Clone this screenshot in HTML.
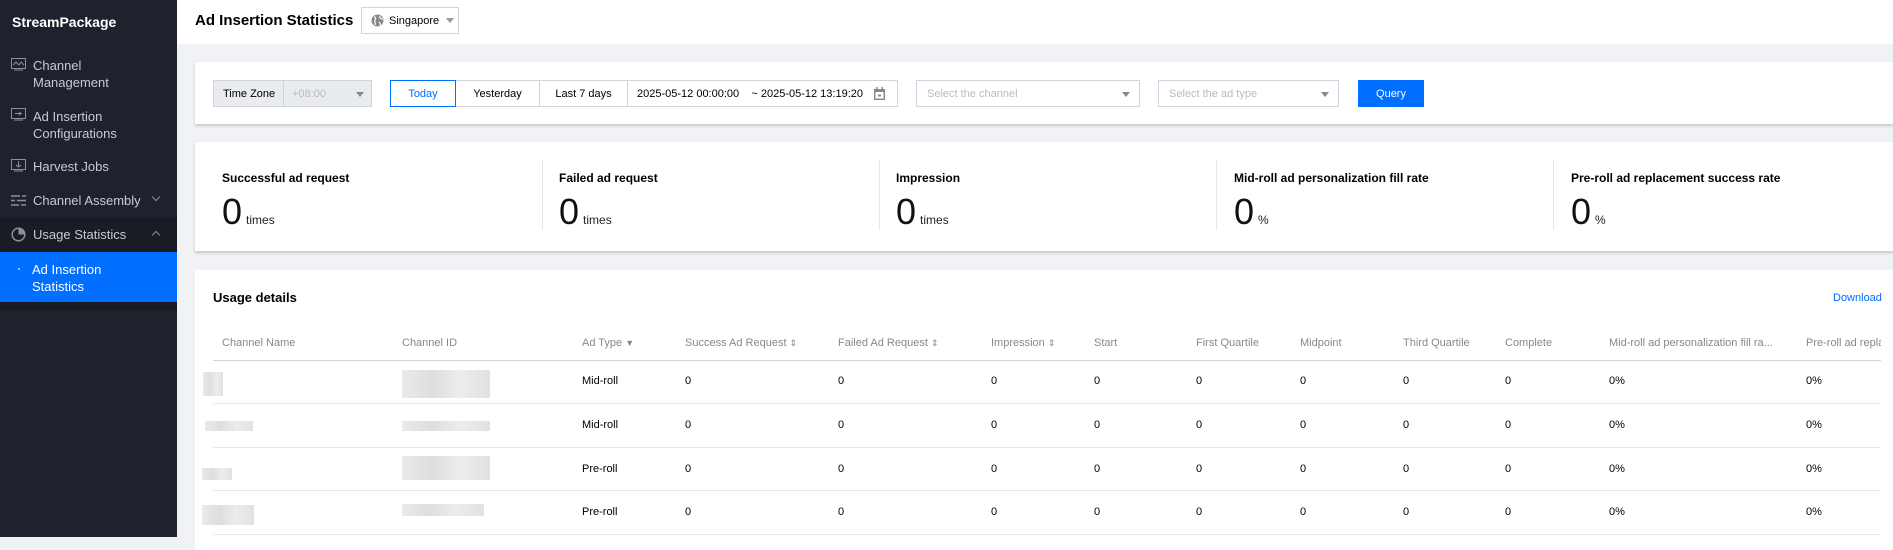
<!DOCTYPE html>
<html><head><meta charset="utf-8"><style>
*{box-sizing:border-box;margin:0;padding:0}
body{width:1893px;height:537px;overflow:hidden;background:#f1f2f5;font-family:"Liberation Sans",Arial,sans-serif;position:relative;color:#000}
.sb{position:absolute;left:0;top:0;width:177px;height:537px;background:#1f222c}
.abs{position:absolute}
.sb .t{color:#c6cad3;font-size:13px;line-height:17px;left:33px}
.ic{position:absolute;left:11px;width:15px;height:13px}
.hdr{position:absolute;left:177px;top:0;width:1716px;height:44px;background:#fff}
.card{position:absolute;left:195px;width:1698px;background:#fff;box-shadow:0 2px 3px rgba(0,0,0,.18)}
.box{position:absolute;border:1px solid #cfd5de;font-size:12px;display:flex;align-items:center}
.ph{color:#bbb}
.tri{position:absolute;width:0;height:0;border-left:4px solid transparent;border-right:4px solid transparent;border-top:5px solid #888}
.lab{position:absolute;top:29px;font-size:12px;font-weight:bold}
.num{position:absolute;top:50px;font-size:36px;font-weight:300;line-height:40px;color:#111}
.unit{font-size:12px;margin-left:4px;color:#222}
.div{position:absolute;top:18px;height:70px;width:1px;background:#e5e5e5}
.th{position:absolute;top:337px;font-size:11px;color:#888;white-space:nowrap}
.td{position:absolute;font-size:11px;color:#000}
.hl{position:absolute;left:213px;width:1668px;height:1px;background:#e5e8ec}
.blur{position:absolute;background:linear-gradient(90deg,#e6e6e6,#d8d8d8,#e9e9e9,#dcdcdc);opacity:.85}
</style></head><body>
<div class="sb">
 <div class="abs" style="left:12px;top:14px;color:#fff;font-weight:bold;font-size:14px">StreamPackage</div>
 <svg class="ic" style="top:58px" viewBox="0 0 15 13"><rect x="0.5" y="0.5" width="14" height="10" fill="none" stroke="#8a909c"/><path d="M2 7l3-3 3 3 2-3 3 3" fill="none" stroke="#8a909c"/><rect x="3" y="11.5" width="9" height="1" fill="#8a909c"/></svg>
 <div class="abs t" style="top:57px">Channel<br>Management</div>
 <svg class="ic" style="top:108px" viewBox="0 0 15 13"><rect x="0.5" y="0.5" width="14" height="10" fill="none" stroke="#8a909c"/><path d="M4 5.5h7M8 4l2 1.5-2 1.5" fill="none" stroke="#8a909c"/><rect x="3" y="11.5" width="9" height="1" fill="#8a909c"/></svg>
 <div class="abs t" style="top:108px">Ad Insertion<br>Configurations</div>
 <svg class="ic" style="top:159px" viewBox="0 0 15 13"><rect x="0.5" y="0.5" width="14" height="10" fill="none" stroke="#8a909c"/><path d="M7.5 2v6M5 6l2.5 2 2.5-2" fill="none" stroke="#8a909c"/><rect x="3" y="11.5" width="9" height="1" fill="#8a909c"/></svg>
 <div class="abs t" style="top:158px">Harvest Jobs</div>
 <svg class="ic" style="top:194px" viewBox="0 0 15 13"><path d="M0 2h15M0 6.5h15M0 11h15" stroke="#8a909c" stroke-width="1.5"/><path d="M10 0v4M5 4.5v4M9 9v4" stroke="#1f222c" stroke-width="2"/></svg>
 <div class="abs t" style="top:192px">Channel Assembly</div>
 <div class="abs" style="left:153px;top:194px;width:6px;height:6px;border-right:1px solid #8a909c;border-bottom:1px solid #8a909c;transform:rotate(45deg)"></div>
 <div class="abs" style="left:0;top:217px;width:177px;height:35px;background:#191c24"></div>
 <svg class="ic" style="top:227px;height:15px" viewBox="0 0 15 15"><circle cx="7.5" cy="7.5" r="6.3" fill="none" stroke="#8a909c" stroke-width="1.5"/><path d="M7.5 7.5V1.2A6.3 6.3 0 0 1 13.8 7.5z" fill="#8a909c"/></svg>
 <div class="abs t" style="top:226px">Usage Statistics</div>
 <div class="abs" style="left:153px;top:232px;width:6px;height:6px;border-left:1px solid #8a909c;border-top:1px solid #8a909c;transform:rotate(45deg)"></div>
 <div class="abs" style="left:0;top:252px;width:177px;height:50px;background:#006eff"></div>
 <div class="abs" style="left:18px;top:268px;width:2px;height:2px;background:#9cc3ff"></div>
 <div class="abs t" style="top:261px;left:32px;color:#fff">Ad Insertion<br>Statistics</div>
 <div class="abs" style="left:0;top:302px;width:177px;height:9px;background:#191c24"></div>
</div>
<div class="hdr">
 <div class="abs" style="left:18px;top:12px;font-size:15px;font-weight:bold">Ad Insertion Statistics</div>
 <div class="box" style="left:184px;top:7px;width:98px;height:27px;padding-left:9px">
  <svg width="13" height="13" viewBox="0 0 13 13"><circle cx="6.5" cy="6.5" r="6" fill="#888"/><path d="M3 3c2 0 2 2 1 3s1 3 0 5M9 2c-1 2 1 3 3 3M8 8c1 1 2 2 1 4" stroke="#fff" stroke-width="1.2" fill="none"/></svg>
  <span style="margin-left:5px;font-size:11px">Singapore</span>
  <div class="tri" style="left:84px;top:10px;border-top-color:#999"></div>
 </div>
</div>
<div class="card" style="top:62px;height:62px">
 <div class="box" style="left:18px;top:18px;width:71px;height:27px;background:#e9ebef;padding-left:9px;font-size:11px">Time Zone</div>
 <div class="box" style="left:88px;top:18px;width:89px;height:27px;background:#e9ebef;padding-left:8px;color:#bbb;font-size:11px">+08:00<div class="tri" style="left:72px;top:11px"></div></div>
 <div class="box" style="left:195px;top:18px;width:66px;height:27px;border-color:#006eff;color:#006eff;justify-content:center;z-index:2;font-size:11px">Today</div>
 <div class="box" style="left:260px;top:18px;width:85px;height:27px;justify-content:center;font-size:11px">Yesterday</div>
 <div class="box" style="left:344px;top:18px;width:89px;height:27px;justify-content:center;font-size:11px">Last 7 days</div>
 <div class="box" style="left:432px;top:18px;width:271px;height:27px;padding-left:9px;font-size:11px">2025-05-12 00:00:00 &nbsp;&nbsp; ~ 2025-05-12 13:19:20
  <svg class="abs" style="left:246px;top:6px" width="11" height="13" viewBox="0 0 11 13"><rect x="0" y="2" width="11" height="11" fill="#888"/><rect x="1.5" y="5" width="8" height="6.5" fill="#fff"/><rect x="4" y="7.5" width="3" height="2" fill="#888"/><rect x="2" y="0" width="1.5" height="3" fill="#888"/><rect x="7.5" y="0" width="1.5" height="3" fill="#888"/></svg></div>
 <div class="box ph" style="left:721px;top:18px;width:224px;height:27px;padding-left:10px;font-size:11px">Select the channel<div class="tri" style="left:205px;top:11px"></div></div>
 <div class="box ph" style="left:963px;top:18px;width:181px;height:27px;padding-left:10px;font-size:11px">Select the ad type<div class="tri" style="left:162px;top:11px"></div></div>
 <div class="abs" style="left:1163px;top:18px;width:66px;height:27px;background:#006eff;color:#fff;font-size:11px;display:flex;align-items:center;justify-content:center">Query</div>
</div>
<div class="card" style="top:142px;height:109px">
 <div class="lab" style="left:27px">Successful ad request</div><div class="num" style="left:27px">0<span class="unit">times</span></div>
 <div class="div" style="left:347px"></div>
 <div class="lab" style="left:364px">Failed ad request</div><div class="num" style="left:364px">0<span class="unit">times</span></div>
 <div class="div" style="left:684px"></div>
 <div class="lab" style="left:701px">Impression</div><div class="num" style="left:701px">0<span class="unit">times</span></div>
 <div class="div" style="left:1021px"></div>
 <div class="lab" style="left:1039px">Mid-roll ad personalization fill rate</div><div class="num" style="left:1039px">0<span class="unit">%</span></div>
 <div class="div" style="left:1358px"></div>
 <div class="lab" style="left:1376px">Pre-roll ad replacement success rate</div><div class="num" style="left:1376px">0<span class="unit">%</span></div>
</div>
<div class="card" style="top:270px;height:280px;box-shadow:none"></div>
<div class="abs" style="left:213px;top:290px;font-size:13px;font-weight:bold">Usage details</div>
<div class="abs" style="left:1833px;top:292px;font-size:11px;color:#006eff">Download</div>
<div class="th" style="left:222px">Channel Name</div>
<div class="th" style="left:402px">Channel ID</div>
<div class="th" style="left:582px">Ad Type <span style="font-size:9px">&#9660;</span></div>
<div class="th" style="left:685px">Success Ad Request <span style="font-size:9px">&#8661;</span></div>
<div class="th" style="left:838px">Failed Ad Request <span style="font-size:9px">&#8661;</span></div>
<div class="th" style="left:991px">Impression <span style="font-size:9px">&#8661;</span></div>
<div class="th" style="left:1094px">Start</div>
<div class="th" style="left:1196px">First Quartile</div>
<div class="th" style="left:1300px">Midpoint</div>
<div class="th" style="left:1403px">Third Quartile</div>
<div class="th" style="left:1505px">Complete</div>
<div class="th" style="left:1609px">Mid-roll ad personalization fill ra...</div>
<div class="th" style="left:1806px;width:75px;overflow:hidden">Pre-roll ad replacement</div>
<div class="hl" style="top:360px;background:#cfd5de"></div>
<div class="hl" style="top:403px"></div><div class="hl" style="top:447px"></div><div class="hl" style="top:490px"></div><div class="hl" style="top:534px"></div>
<div class="blur" style="left:203px;top:372px;width:20px;height:24px"></div>
<div class="blur" style="left:402px;top:370px;width:88px;height:28px"></div>
<div class="blur" style="left:205px;top:421px;width:48px;height:10px"></div>
<div class="blur" style="left:402px;top:421px;width:88px;height:10px"></div>
<div class="blur" style="left:202px;top:468px;width:30px;height:12px"></div>
<div class="blur" style="left:402px;top:456px;width:88px;height:24px"></div>
<div class="blur" style="left:202px;top:505px;width:52px;height:20px"></div>
<div class="blur" style="left:402px;top:504px;width:82px;height:12px"></div>
<div id="rows"></div>
<script>
var ys=[375,419,463,506],t=["Mid-roll","Mid-roll","Pre-roll","Pre-roll"],xs=[685,838,991,1094,1196,1300,1403,1505],h="";
ys.forEach(function(y,i){h+='<div class="td" style="left:582px;top:'+y+'px">'+t[i]+'</div>';xs.forEach(function(x){h+='<div class="td" style="left:'+x+'px;top:'+y+'px">0</div>'});h+='<div class="td" style="left:1609px;top:'+y+'px">0%</div><div class="td" style="left:1806px;top:'+y+'px">0%</div>';});
document.getElementById("rows").innerHTML=h;
</script>
</body></html>
